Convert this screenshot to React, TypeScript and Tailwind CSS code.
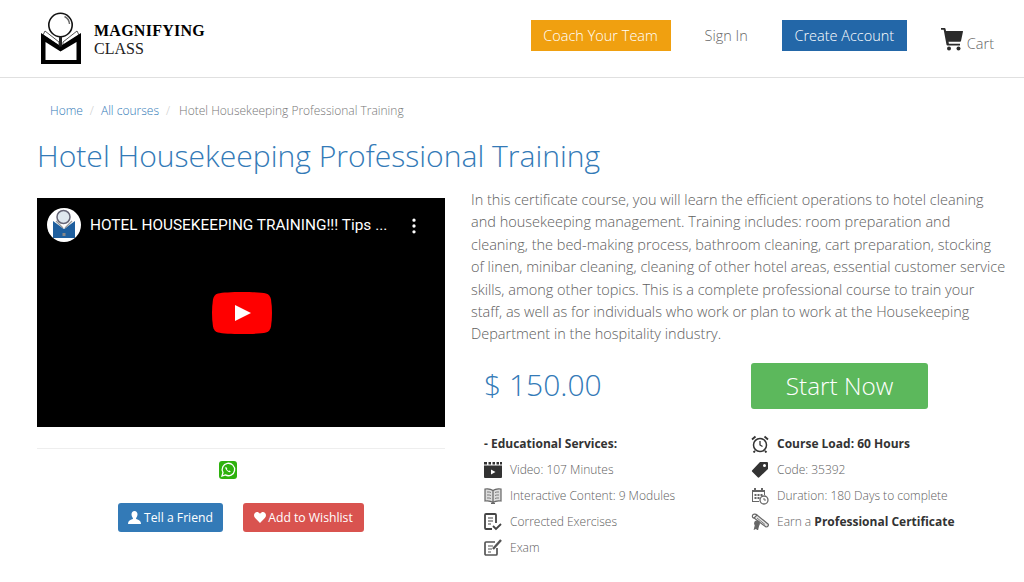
import { MoreVertical } from "lucide-react";

const OPEN = "font-['Open_Sans',sans-serif]";

function Logo() {
  return (
    <svg width="42" height="54" viewBox="0 0 42 54" className="block">
      <path d="M4 19 L18 30 L18 34 L2 23 Z" fill="#fff" stroke="#555" strokeWidth="1" />
      <path d="M36 19 L22 30 L22 34 L38 23 Z" fill="#fff" stroke="#555" strokeWidth="1" />
      <path d="M0 21 L19.500 34 L40 21 L40 52 L0 52 Z M4.500 30 L4.500 48 L35.500 48 L35.500 30 L19.500 39.500 Z" fill="#000" fillRule="evenodd" />
      <circle cx="19.500" cy="13" r="11.700" fill="#fff" stroke="#111" strokeWidth="1.600" />
      <path d="M23.500 4.500 A9 9 0 0 1 28.500 12" fill="none" stroke="#666" strokeWidth="1.400" />
      <rect x="18" y="24.500" width="3" height="10" fill="#222" />
    </svg>
  );
}

function Cart() {
  return (
    <svg width="22" height="23" viewBox="0 0 22 23" fill="#2b2b2b">
      <path d="M0 0h3.500a1 1 0 0 1 1 .8L5 3h16.500a.5.500 0 0 1 .5.6l-2 9.400a1 1 0 0 1-1 .8H7.500l.4 2h11.100v1.700H6.500a1 1 0 0 1-1-.8L2.700 1.700H0z" />
      <circle cx="8" cy="20.500" r="2" />
      <circle cx="17.500" cy="20.500" r="2" />
    </svg>
  );
}

function Thumb() {
  return (
    <div className="w-[34px] h-[34px] rounded-full bg-white overflow-hidden shrink-0">
      <svg width="34" height="34" viewBox="0 0 34 34">
        <path d="M6 13 L17 21 L28 13 L28 30 L6 30 Z" fill="#1f5f9e" />
        <path d="M9 13 L16 20 M25 13 L18 20" stroke="#999" strokeWidth="1.200" />
        <circle cx="16.500" cy="9" r="6.500" fill="#dfe8ef" stroke="#667" strokeWidth="1.500" />
        <rect x="15.500" y="25" width="3" height="3" fill="#888" />
      </svg>
    </div>
  );
}

function VideoIcon() {
  return (
    <svg width="18" height="16" viewBox="0 0 18 16" fill="#333">
      <path d="M0 0h3v2.500H0zM4.500 0H7v2.500H4.500zM8.500 0H11v2.500H8.500zM12.500 0H15v2.500h-2.500zM16 0h2v2.500h-2z" />
      <path d="M0 3.500h18V15a1 1 0 0 1-1 1H1a1 1 0 0 1-1-1z" />
      <path d="M7 7.500l4.500 2.500L7 12.500z" fill="#fff" />
    </svg>
  );
}

function BookIcon() {
  return (
    <svg width="18" height="16" viewBox="0 0 18 16" fill="#ddd" stroke="#666" strokeWidth="1.200">
      <path d="M9 2.500C7 1 4 .5 1 1v12c3-.5 6 0 8 1.500 2-1.500 5-2 8-1.500V1C14 .5 11 1 9 2.500zM9 2.500v12" />
      <path d="M3 4c1.500-.2 3 0 4 .5M3 7c1.500-.2 3 0 4 .5M3 10c1.500-.2 3 0 4 .5M15 4c-1.500-.2-3 0-4 .5M15 7c-1.500-.2-3 0-4 .5M15 10c-1.500-.2-3 0-4 .5" fill="none" strokeWidth="0.800" />
      <path d="M7 15.500h4" fill="none" />
    </svg>
  );
}

function ExerciseIcon() {
  return (
    <svg width="18" height="18" viewBox="0 0 18 18" fill="none" stroke="#444" strokeWidth="1.800">
      <path d="M8 16H2a1 1 0 0 1-1-1V2a1 1 0 0 1 1-1h9a1 1 0 0 1 1 1v8" />
      <path d="M4 5h5M4 8h5M4 11h3" strokeWidth="1.200" />
      <path d="M9 13l3 3 5-5" strokeWidth="1.800" />
    </svg>
  );
}

function ExamIcon() {
  return (
    <svg width="18" height="17" viewBox="0 0 18 17" fill="none" stroke="#555" strokeWidth="1.700">
      <path d="M13 9v6a1 1 0 0 1-1 1H2a1 1 0 0 1-1-1V4a1 1 0 0 1 1-1h9" />
      <path d="M4 7h5M4 10h4M4 13h3" strokeWidth="1.200" />
      <path d="M9 10L17 1" strokeWidth="2.400" />
    </svg>
  );
}

function ClockIcon() {
  return (
    <svg width="18" height="18" viewBox="0 0 18 18" fill="none" stroke="#333" strokeWidth="1.500">
      <circle cx="9" cy="10" r="6.500" />
      <path d="M9 6v4l2.500 1.500" strokeWidth="1.300" />
      <path d="M1 4.500L4.500 1.500M17 4.500L13.500 1.500M4 16l-1.500 1.500M14 16l1.500 1.500" strokeWidth="1.800" />
    </svg>
  );
}

function TagIcon() {
  return (
    <svg width="18" height="17" viewBox="0 0 18 17" fill="#333">
      <path d="M9 1h7a1 1 0 0 1 1 1v6l-9 8.500a1 1 0 0 1-1 0L1 10.500a1 1 0 0 1 0-1zM13.500 3a1.500 1.500 0 1 0 0 3 1.500 1.500 0 0 0 0-3z" fillRule="evenodd" />
    </svg>
  );
}

function CalendarIcon() {
  return (
    <svg width="18" height="18" viewBox="0 0 18 18" fill="#666">
      <path d="M1 3h13v2H1zM3 1h2v2H3zM10 1h2v2h-2z" />
      <path d="M1 5h1v9h6v1H1zM13 5h1v3h-1z" />
      <path d="M3.500 7h2v2h-2zM6.500 7h2v2h-2zM9.500 7h2v2h-2zM3.500 10h2v2h-2zM6.500 10h2v2h-2z" />
      <circle cx="13" cy="13" r="4" fill="#fff" stroke="#666" strokeWidth="1.300" />
      <path d="M13 11v2h2" fill="none" stroke="#666" />
    </svg>
  );
}

function DiplomaIcon() {
  return (
    <svg width="18" height="17" viewBox="0 0 18 17" fill="none" stroke="#666" strokeWidth="1.200">
      <path d="M3 5l3-3 11 9c1 1 0 3-2 3z" fill="#e5e5e5" />
      <path d="M6 2C4.500 .5 2 1 1.500 2.500S2 5 3 5" />
      <path d="M6 5l8 6.500" strokeWidth="0.800" />
      <circle cx="6" cy="10.500" r="2.300" fill="#666" />
      <path d="M4.500 12l-1 4 2-1 1 2 1-4.500" fill="#666" />
    </svg>
  );
}

function WhatsApp() {
  return (
    <svg width="18" height="18" viewBox="0 0 18 18">
      <rect width="18" height="18" rx="3" fill="#2eb20e" />
      <path d="M3 15l1-3.500a6.200 6.200 0 1 1 2.400 2.400z" fill="none" stroke="#fff" strokeWidth="1.300" />
      <path d="M6.700 5.800c-.9 1 .1 2.900 1.300 4s2.800 1.900 3.800.9l-1.300-1.300-.8.500c-.8-.3-1.600-1.100-1.900-1.900l.5-.8z" fill="#fff" />
    </svg>
  );
}

function UserSolid() {
  return (
    <svg width="13" height="13" viewBox="0 0 13 13" fill="#fff">
      <path d="M6.500 0C4.700 0 3.500 1.300 3.500 3.300c0 1.500.6 2.900 1.400 3.600v1.200C3 8.700.5 9.600.2 11.500L0 13h13l-.2-1.500c-.3-1.900-2.800-2.800-4.700-3.400V6.900c.8-.7 1.400-2.100 1.400-3.600C9.500 1.300 8.300 0 6.500 0z" />
    </svg>
  );
}

function HeartSolid() {
  return (
    <svg width="12" height="11" viewBox="0 0 13 12" fill="#fff">
      <path d="M6.500 12L1.200 6.500C-.4 4.800-.4 2.400 1 1 2.500-.4 4.800-.2 6.500 1.800 8.200-.2 10.500-.4 12 1c1.400 1.400 1.400 3.800-.2 5.500z" />
    </svg>
  );
}

function Spec({ icon, children }: { icon: React.ReactNode; children: React.ReactNode }) {
  return (
    <div className="flex items-center h-[26px]">
      <div className="w-[26px] flex items-center">{icon}</div>
      <span>{children}</span>
    </div>
  );
}

export default function App() {
  return (
    <div className={`${OPEN} w-[1024px] h-[582px] overflow-hidden bg-white text-[#5e5e5e] font-light`}>
      <header className="h-[78px] border-b border-[#e0e0e0] flex items-center pl-[41px] pr-[30px]">
        <div className="flex items-center gap-[11px]">
          <Logo />
          <div className="font-['Liberation_Serif',serif] text-black leading-[18px] pt-[3px]">
            <div className="font-bold text-[16px] tracking-[0.25px]">MAGNIFYING</div>
            <div className="text-[16px] text-[#222]">CLASS</div>
          </div>
        </div>
        <nav className="ml-auto flex items-center text-[14.500px] -mt-[6px]">
          <a className="w-[140px] h-[31px] flex items-center justify-center bg-[#f0a010] text-white">Coach Your Team</a>
          <a className="ml-[34px] text-[#666]">Sign In</a>
          <a className="ml-[34px] w-[125px] h-[31px] flex items-center justify-center bg-[#2367a8] text-white">Create Account</a>
          <a className="ml-[34px] flex items-end gap-[4px] text-[#666] translate-y-[4px]">
            <Cart />
            <span className="translate-y-[4px]">Cart</span>
          </a>
        </nav>
      </header>

      <main className="pl-[37px] pr-[16px]">
        <div className="pt-[24px] pl-[13px] text-[12px] leading-[18px] flex gap-[7px]">
          <a className="text-[#337ab7]">Home</a>
          <span className="text-[#ccc]">/</span>
          <a className="text-[#337ab7]">All courses</a>
          <span className="text-[#ccc]">/</span>
          <span className="text-[#777] ml-[2px]">Hotel Housekeeping Professional Training</span>
        </div>
        <h1 className="mt-[16px] text-[30.100px] leading-[40px] text-[#337ab7] font-light">Hotel Housekeeping Professional Training</h1>

        <div className="mt-[22px] flex">
          <div className="w-[408px] shrink-0">
            <div className="relative h-[229px] bg-black">
              <div className="flex items-center pl-[10px] pt-[10px]">
                <Thumb />
                <span className="ml-[9px] font-['Roboto',sans-serif] font-normal text-[15.400px] text-white translate-y-[1px]">HOTEL HOUSEKEEPING TRAINING!!! Tips ...</span>
                <MoreVertical size={20} className="ml-[17px] text-white translate-y-[1px]" />
              </div>
              <svg width="60" height="42" viewBox="0 0 60 42" className="absolute left-[175px] top-[94px]">
                <path d="M30 0c10 0 20 .5 24 1.500 3 .8 4.500 3 5 6 .7 4.500 1 9 1 13.500s-.3 9-1 13.500c-.5 3-2 5.200-5 6-4 1-14 1.500-24 1.500s-20-.5-24-1.500c-3-.8-4.500-3-5-6C.3 30 0 25.500 0 21s.3-9 1-13.500c.5-3 2-5.200 5-6C10 .5 20 0 30 0z" fill="#f00" />
                <path d="M23 13l16 8-16 8z" fill="#fff" />
              </svg>
            </div>
            <div className="mt-[21px] border-t border-[#eee] pt-[12px] flex justify-center pr-[27px]">
              <WhatsApp />
            </div>
            <div className="mt-[24px] flex gap-[20px] pl-[81px] text-[12.200px] font-normal text-white">
              <a className="h-[29px] w-[105px] rounded-[3px] bg-[#337ab7] flex items-center justify-center gap-[3px]">
                <UserSolid /><span className="translate-y-[1px]">Tell a Friend</span>
              </a>
              <a className="h-[29px] w-[121px] rounded-[3px] bg-[#d9534f] flex items-center justify-center gap-[2px]">
                <HeartSolid /><span className="translate-y-[1px]">Add to Wishlist</span>
              </a>
            </div>
          </div>

          <div className="ml-[27px] flex-1 -mt-[9px] -translate-x-[1px]">
            <p className="text-[14.500px] leading-[22.400px]">
              In this certificate course, you will learn the efficient operations to hotel cleaning and housekeeping management. Training includes: room preparation and cleaning, the bed-making process, bathroom cleaning, cart preparation, stocking of linen, minibar cleaning, cleaning of other hotel areas, essential customer service skills, among other topics. This is a complete professional course to train your staff, as well as for individuals who work or plan to work at the Housekeeping Department in the hospitality industry.
            </p>
            <div className="mt-[17px] flex items-center h-[46px]">
              <div className="w-[280px] pl-[13px] text-[30px] text-[#337ab7] -translate-y-[1px]">$ 150.00</div>
              <a className="w-[177px] h-[46px] rounded-[3px] bg-[#5cb85c] text-white text-[24.300px] font-light flex items-center justify-center">Start Now</a>
            </div>
            <div className="mt-[22px] flex text-[12px]">
              <div className="w-[280px] pl-[13px]">
                <div className="h-[26px] flex items-center font-bold text-[#333]">- Educational Services:</div>
                <Spec icon={<VideoIcon />}>Video: 107 Minutes</Spec>
                <Spec icon={<BookIcon />}>Interactive Content: 9 Modules</Spec>
                <Spec icon={<ExerciseIcon />}>Corrected Exercises</Spec>
                <Spec icon={<ExamIcon />}>Exam</Spec>
              </div>
              <div>
                <Spec icon={<ClockIcon />}><b className="font-bold text-[#333]">Course Load: 60 Hours</b></Spec>
                <Spec icon={<TagIcon />}>Code: 35392</Spec>
                <Spec icon={<CalendarIcon />}>Duration: 180 Days to complete</Spec>
                <Spec icon={<DiplomaIcon />}>Earn a <b className="font-bold text-[#333]">Professional Certificate</b></Spec>
              </div>
            </div>
          </div>
        </div>
      </main>
    </div>
  );
}
